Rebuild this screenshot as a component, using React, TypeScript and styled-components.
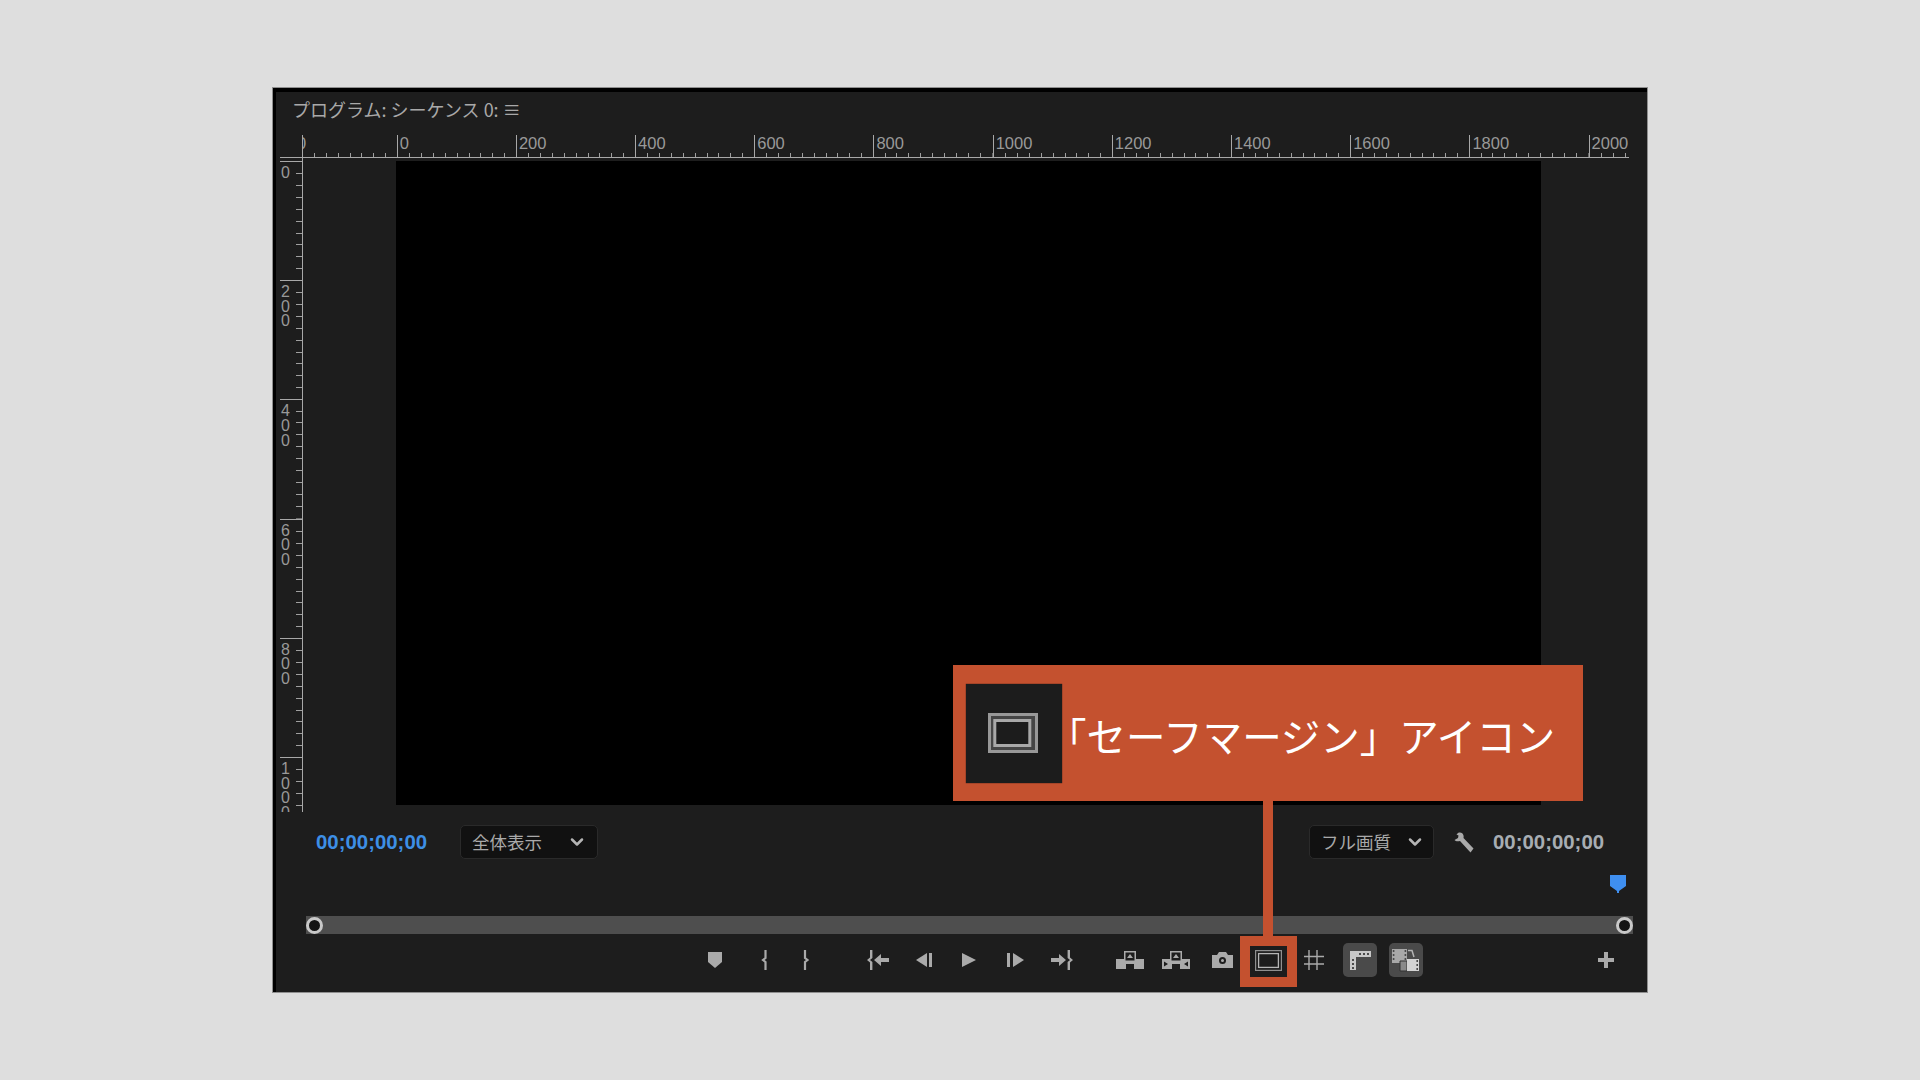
import React from 'react';
import styled, { createGlobalStyle } from 'styled-components';
import { ChevronDown } from 'lucide-react';

const GlobalStyle = createGlobalStyle`
  html, body {
    margin: 0;
    padding: 0;
    background: #dedede;
  }
`;

const Page = styled.div`
  width: 1920px;
  height: 1080px;
  box-sizing: border-box;
  padding: 87px 0 0 272px;
  overflow: hidden;
  font-family: 'Liberation Sans', 'Noto Sans CJK JP', sans-serif;
`;

const Panel = styled.div`
  width: 1376px;
  height: 906px;
  box-sizing: border-box;
  border: 1px solid #8f8f8f;
`;

const Frame = styled.div`
  position: relative;
  height: 100%;
  box-sizing: border-box;
  display: flex;
  flex-direction: column;
  background: #1d1d1d;
  border-top: 4px solid #000;
  border-left: 3px solid #000;
`;

const TitleBar = styled.div`
  height: 34px;
  margin-bottom: 9px;
  padding-left: 16px;
  display: flex;
  align-items: center;
  color: #a9a9a9;
  font-family: 'Noto Sans CJK JP', sans-serif;
  font-size: 18px;
  white-space: nowrap;
`;

const HRuler = styled.div`
  height: 23px;
  margin-left: 4px;
  width: 1349px;
  padding-left: 22px;
  box-sizing: border-box;
  display: flex;
  overflow: hidden;
  border-bottom: 1px solid #a8a8a8;
  flex: none;
`;

const HSegment = styled.div<{ $w: number }>`
  flex: none;
  width: ${({ $w }) => $w}px;
  box-sizing: border-box;
  border-left: 1px solid #a8a8a8;
  overflow: hidden;
  color: #999;
  font-size: 16.5px;
  line-height: 17px;
  padding-left: 2px;
  background-image: repeating-linear-gradient(90deg, transparent 0 10.92px, #a0a0a0 10.92px 11.92px);
  background-size: 100% 4px;
  background-position: bottom;
  background-repeat: no-repeat;
`;

const ClippedLabel = styled.span`
  margin-left: -8px;
`;

const Middle = styled.div`
  height: 654px;
  display: flex;
  flex: none;
`;

const VRuler = styled.div`
  margin-left: 4px;
  width: 23px;
  flex: none;
  box-sizing: border-box;
  padding-top: 3px;
  overflow: hidden;
  border-right: 1px solid #a8a8a8;
`;

const VSegment = styled.div`
  height: 119.2px;
  box-sizing: border-box;
  border-top: 1px solid #a8a8a8;
  padding-top: 4px;
  background-image: repeating-linear-gradient(180deg, transparent 0 10.92px, #a0a0a0 10.92px 11.92px);
  background-size: 6px 100%;
  background-position: right;
  background-repeat: no-repeat;
`;

const Digit = styled.div`
  width: 11px;
  text-align: center;
  color: #999;
  font-size: 16px;
  line-height: 14.6px;
`;

const Viewer = styled.div`
  margin: 3px 0 0 93px;
  width: 1145px;
  height: 644px;
  background: #000;
`;

const InfoRow = styled.div`
  margin-top: 13px;
  height: 34px;
  flex: none;
  display: flex;
  align-items: center;
  padding: 0 43px 0 40px;
`;

const Timecode = styled.div<{ $active?: boolean }>`
  width: 111px;
  white-space: nowrap;
  font-size: 20.4px;
  font-weight: 700;
  color: ${({ $active }) => ($active ? '#3d8fe6' : '#a7adb3')};
`;

const Select = styled.div<{ $w: number; $chevron: number }>`
  width: ${({ $w }) => $w}px;
  height: 34px;
  box-sizing: border-box;
  display: flex;
  align-items: center;
  padding: 0 ${({ $chevron }) => $chevron}px 1px 11px;
  justify-content: space-between;
  background: #111;
  border: 1px solid #2a2a2a;
  border-radius: 5px;
  color: #a9a9a9;
  font-family: 'Noto Sans CJK JP', sans-serif;
  font-size: 17.5px;
`;

const LeftSelect = styled(Select)`
  margin-left: 33px;
`;

const RightGroup = styled.div`
  margin-left: auto;
  display: flex;
  align-items: center;
`;

const Wrench = styled.svg`
  margin: 0 19px 0 19px;
  display: block;
`;

const MarkerRow = styled.div`
  margin-top: 16px;
  height: 18px;
  flex: none;
  display: flex;
  justify-content: flex-end;
  padding-right: 21px;
`;

const Scrubber = styled.div`
  margin: 23px 0 0 30px;
  width: 1327px;
  height: 18px;
  flex: none;
  display: flex;
  align-items: center;
  justify-content: space-between;
  background: #4e4e4e;
`;

const Handle = styled.div`
  width: 17px;
  height: 17px;
  box-sizing: border-box;
  border-radius: 50%;
  border: 3px solid #c8c8c8;
  background: #141414;
`;

const ButtonRow = styled.div`
  margin-top: 3px;
  height: 46px;
  flex: none;
  display: flex;
  align-items: center;
  padding-left: 416px;
`;

const ButtonGroup = styled.div<{ $gap: number }>`
  display: flex;
  margin-right: ${({ $gap }) => $gap}px;
`;

const IconButton = styled.div<{ $on?: boolean }>`
  position: relative;
  width: 46px;
  height: 46px;
  display: flex;
  align-items: center;
  justify-content: center;
  &::before {
    content: '';
    display: ${({ $on }) => ($on ? 'block' : 'none')};
    position: absolute;
    left: 6px;
    top: 6px;
    width: 34px;
    height: 34px;
    border-radius: 5px;
    background: #4a4a4a;
  }
  svg {
    position: relative;
    display: block;
    filter: blur(0.3px);
  }
`;

const HighlightRing = styled.div`
  position: absolute;
  left: -5px;
  top: -1px;
  width: 57px;
  height: 51px;
  box-sizing: border-box;
  border: 10px solid #c4512f;
  &::after {
    content: '';
    position: absolute;
    left: 13px;
    bottom: 41px;
    width: 10px;
    height: 135px;
    background: #c4512f;
  }
`;

const PlusButton = styled(IconButton)`
  margin-left: 154px;
`;

const Callout = styled.div`
  position: absolute;
  left: 677px;
  top: 573px;
  width: 630px;
  height: 136px;
  display: flex;
  align-items: center;
  background: #c4512f;
  padding-left: 13px;
  box-sizing: border-box;
`;

const CalloutIcon = styled.div`
  width: 96px;
  height: 99px;
  flex: none;
  display: flex;
  align-items: center;
  justify-content: center;
  background: #1c1c1c;
  box-shadow: 0 0 1px #111;
  svg {
    margin-right: 2px;
    filter: blur(0.6px);
  }
`;

const CalloutText = styled.div`
  margin: 2px 0 0 -15px;
  color: #fff;
  font-family: 'Noto Sans CJK JP', sans-serif;
  font-size: 39.5px;
  white-space: nowrap;
`;

const G = '#aaaaaa';

const icons = {
  marker: (
    <svg width="14" height="16" viewBox="0 0 14 16" fill={G}>
      <path d="M0 0H14V10L7 16L0 10Z" />
    </svg>
  ),
  markIn: (
    <svg width="20" height="20" viewBox="0 0 20 20" fill="none" stroke={G} strokeWidth="2.2">
      <path d="M14.5 0V8L12 10L14.5 12V20" />
    </svg>
  ),
  markOut: (
    <svg width="20" height="20" viewBox="0 0 20 20" fill="none" stroke={G} strokeWidth="2.2">
      <path d="M8 0V8L10.5 10L8 12V20" />
    </svg>
  ),
  goIn: (
    <svg width="22" height="20" viewBox="0 0 22 20" fill={G}>
      <path d="M3 0H5.4V8L3 10L5.4 12V20H3V12.5L0 10L3 7.5Z" />
      <path d="M7 10L14 4V8H22V12H14V16Z" />
    </svg>
  ),
  stepBack: (
    <svg width="16" height="14" viewBox="0 0 16 14" fill={G}>
      <path d="M0 7L11 0V14Z" />
      <rect x="13" width="3" height="14" />
    </svg>
  ),
  play: (
    <svg width="16" height="14" viewBox="0 0 16 14" fill={G}>
      <path d="M0 0L14 7L0 14Z" />
    </svg>
  ),
  stepFwd: (
    <svg width="19" height="14" viewBox="0 0 19 14" fill={G}>
      <rect width="3" height="14" />
      <path d="M6 0L17 7L6 14Z" />
    </svg>
  ),
  goOut: (
    <svg width="22" height="20" viewBox="0 0 22 20" fill={G}>
      <path d="M15 10L8 4V8H0V12H8V16Z" />
      <path d="M19 0H16.6V8L19 10L16.6 12V20H19V12.5L22 10L19 7.5Z" />
    </svg>
  ),
  lift: (
    <svg width="28" height="18" viewBox="0 0 28 18" fill={G}>
      <path d="M0 8H9V10H19V8H28V18H18V13H10V18H0Z" />
      <path fillRule="evenodd" d="M8 0H20V11H8ZM9.5 1.5V9.5H18.5V1.5Z" />
      <path d="M14 3L17 7H11Z" />
    </svg>
  ),
  extract: (
    <svg width="28" height="18" viewBox="0 0 28 18" fill={G}>
      <path fillRule="evenodd" d="M0 8H9V10H19V8H28V18H18V13H10V18H0ZM2 10.5V15.5L6 13ZM26 10.5V15.5L22 13Z" />
      <path fillRule="evenodd" d="M8 0H20V11H8ZM9.5 1.5V9.5H18.5V1.5Z" />
      <path d="M14 3L17 7H11Z" />
    </svg>
  ),
  camera: (
    <svg width="21" height="16" viewBox="0 0 21 16" fill={G}>
      <path
        fillRule="evenodd"
        d="M0 3H5L7 0H14L16 3H21V16H0ZM10.5 5A3.5 3.5 0 1 0 10.5 12A3.5 3.5 0 1 0 10.5 5ZM10.5 7A1.5 1.5 0 1 1 10.5 10A1.5 1.5 0 1 1 10.5 7Z"
      />
    </svg>
  ),
  safe: (
    <svg width="27" height="21" viewBox="0 0 27 21" fill="none">
      <rect x="0.6" y="0.6" width="25.8" height="19.8" stroke="#8f8f8f" strokeWidth="1.2" />
      <rect x="3.6" y="3.6" width="19.8" height="13.8" stroke="#b5b5b5" strokeWidth="1.3" />
    </svg>
  ),
  grid: (
    <svg width="20" height="20" viewBox="0 0 20 20" stroke={G} strokeWidth="1.4">
      <path d="M5 0V20M13 0V20M0 6.5H20M0 14H20" />
    </svg>
  ),
  trim: (
    <svg width="21" height="19" viewBox="0 0 21 19" fill="#c8c8c8">
      <path
        fillRule="evenodd"
        d="M0 0H21V6H6V19H0ZM9 2V4H11V2ZM13 2V4H15V2ZM17 2V4H19V2ZM2 8V10H4V8ZM2 12V14H4V12ZM2 16V18H4V16Z"
      />
    </svg>
  ),
  compare: (
    <svg width="28" height="23" viewBox="0 0 28 23">
      <path
        fill="#a8a8a8"
        fillRule="evenodd"
        d="M0 0H15V14H0ZM0.8 1V3H2.4V1ZM0.8 5V7H2.4V5ZM0.8 9V11H2.4V9ZM12.6 1V3H14.2V1ZM12.6 5V7H14.2V5ZM12.6 9V11H14.2V9Z"
      />
      <path fill="#8a8a8a" stroke="#333" strokeWidth="1" d="M8 12H15V22H8Z" />
      <path
        fill="#d4d4d4"
        fillRule="evenodd"
        d="M15 10H27V22H15ZM24.4 11V13H26V11ZM24.4 15V17H26V15ZM24.4 19V21H26V19Z"
      />
      <path fill="none" stroke="#b4b4b4" strokeWidth="1.5" d="M16 1.5H20L22 8" />
    </svg>
  ),
  plus: (
    <svg width="16" height="16" viewBox="0 0 16 16" fill={G}>
      <path d="M6 0H10V6H16V10H10V16H6V10H0V6H6Z" />
    </svg>
  ),
};

const hLabels = ['200', '400', '600', '800', '1000', '1200', '1400', '1600', '1800', '2000'];
const vLabels = ['0', '200', '400', '600', '800', '1000'];

export default function App() {
  return (
    <>
      <GlobalStyle />
      <Page>
        <Panel>
          <Frame>
            <TitleBar>プログラム: シーケンス 0: ≡</TitleBar>

            <HRuler>
              <HSegment $w={94.7}>
                <ClippedLabel>0</ClippedLabel>
              </HSegment>
              <HSegment $w={119.2}>0</HSegment>
              {hLabels.map((label) => (
                <HSegment key={label} $w={119.2}>
                  {label}
                </HSegment>
              ))}
            </HRuler>

            <Middle>
              <VRuler>
                {vLabels.map((label) => (
                  <VSegment key={label}>
                    {label.split('').map((d, i) => (
                      <Digit key={i}>{d}</Digit>
                    ))}
                  </VSegment>
                ))}
              </VRuler>
              <Viewer />
            </Middle>

            <InfoRow>
              <Timecode $active>00;00;00;00</Timecode>
              <LeftSelect $w={138} $chevron={10}>
                全体表示
                <ChevronDown size={20} strokeWidth={3} color="#b5b5b5" />
              </LeftSelect>
              <RightGroup>
                <Select $w={125} $chevron={8}>
                  フル画質
                  <ChevronDown size={20} strokeWidth={3} color="#b5b5b5" />
                </Select>
                <Wrench width="21" height="21" viewBox="0 0 21 21" fill={G}>
                  <path d="M1 5L5 1C7.5 0 10 1 10.5 3.5C10.8 5 10.5 6 10.5 6L20.5 16.5L17.5 20.5L7 9C5 9.5 2.5 9.5 1.5 8L5 6L5.5 3.5L3.5 2.5L1 5Z" />
                </Wrench>
                <Timecode>00;00;00;00</Timecode>
              </RightGroup>
            </InfoRow>

            <MarkerRow>
              <svg width="16" height="18" viewBox="0 0 16 18" fill="#3f8ff0">
                <path d="M0 0H16V11L9 16V18H7V16L0 11Z" />
              </svg>
            </MarkerRow>

            <Scrubber>
              <Handle />
              <Handle />
            </Scrubber>

            <ButtonRow>
              <ButtonGroup $gap={25}>
                <IconButton>{icons.marker}</IconButton>
                <IconButton>{icons.markIn}</IconButton>
                <IconButton>{icons.markOut}</IconButton>
              </ButtonGroup>
              <ButtonGroup $gap={22}>
                <IconButton>{icons.goIn}</IconButton>
                <IconButton>{icons.stepBack}</IconButton>
                <IconButton>{icons.play}</IconButton>
                <IconButton>{icons.stepFwd}</IconButton>
                <IconButton>{icons.goOut}</IconButton>
              </ButtonGroup>
              <ButtonGroup $gap={0}>
                <IconButton>{icons.lift}</IconButton>
                <IconButton>{icons.extract}</IconButton>
                <IconButton>{icons.camera}</IconButton>
                <IconButton>
                  <HighlightRing />
                  {icons.safe}
                </IconButton>
                <IconButton>{icons.grid}</IconButton>
                <IconButton $on>{icons.trim}</IconButton>
                <IconButton $on>{icons.compare}</IconButton>
              </ButtonGroup>
              <PlusButton>{icons.plus}</PlusButton>
            </ButtonRow>

            <Callout>
              <CalloutIcon>
                <svg width="50" height="40" viewBox="0 0 50 40" fill="none">
                  <rect x="3" y="3" width="44" height="34" fill="#454545" />
                  <rect x="1.5" y="1.5" width="47" height="37" stroke="#989898" strokeWidth="3" />
                  <rect x="6.8" y="7.5" width="35" height="25" fill="#1c1c1c" stroke="#a8a8a8" strokeWidth="3" />
                </svg>
              </CalloutIcon>
              <CalloutText>「セーフマージン」アイコン</CalloutText>
            </Callout>
          </Frame>
        </Panel>
      </Page>
    </>
  );
}
